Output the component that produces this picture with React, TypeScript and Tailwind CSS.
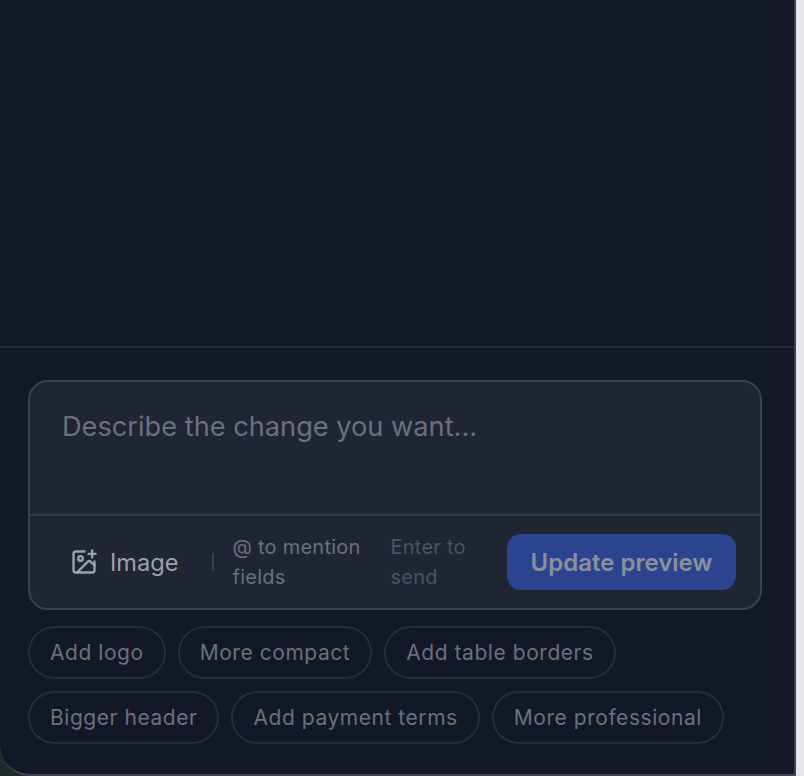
import { ImagePlus } from 'lucide-react';

const row1 = ['Add logo', 'More compact', 'Add table borders'];
const row2 = ['Bigger header', 'Add payment terms', 'More professional'];

function Chip({ label }: { label: string }) {
  return (
    <button className="h-[53px] rounded-full border-2 border-[#262c39] px-[20px] text-[21px] leading-[30px] tracking-[0.55px] text-[#6b707d]">
      {label}
    </button>
  );
}

export default function App() {
  return (
    <div className="h-[776px] w-[804px] overflow-hidden bg-[#e5e7eb] font-['Inter',sans-serif]">
      <div className="h-[776px] w-[796px] bg-[#1e2b28]">
        <div className="flex h-[776px] flex-col rounded-bl-[30px] border-r-2 border-b-2 border-[#3f4450] bg-[#121826]">
          <div className="h-[346px] shrink-0" />
          <div className="flex-1 border-t-2 border-[#252b38] px-[28px] pt-[32px]">
            <div className="w-[734px] rounded-[20px] border-2 border-[#3a404d] bg-[#1f2532]">
              <div className="h-[132px] px-[32px] pt-[26px] text-[27.2px] leading-[38px] text-[#6b707d]">
                Describe the change you want...
              </div>
              <div className="flex h-[94px] items-center border-t-2 border-[#343a47] pl-[40px] pr-[24px]">
                <button className="flex items-center gap-[12px] text-[23.6px] leading-[32px] text-[#9ca1ac]">
                  <ImagePlus className="h-[28px] w-[28px]" strokeWidth={2} />
                  <span className="pt-[2px]">Image</span>
                </button>
                <span className="ml-[34px] h-[18px] w-[2px] bg-[#3a404d]" />
                <span className="ml-[18px] w-[140px] text-[20px] leading-[30px] tracking-[0.25px] text-[#6b707d]">
                  @ to mention fields
                </span>
                <span className="ml-[18px] w-[100px] text-[20px] leading-[30px] tracking-[0.25px] text-[#4d5360]">
                  Enter to send
                </span>
                <button className="ml-auto h-[56px] w-[229px] rounded-[14px] bg-[#2b4490] pt-[2px] text-[24px] font-semibold leading-[32px] text-[#8b8f9e]">
                  Update preview
                </button>
              </div>
            </div>
            <div className="mt-[16px] flex flex-col gap-[12px]">
              <div className="flex gap-[12px]">
                {row1.map((c) => (
                  <Chip key={c} label={c} />
                ))}
              </div>
              <div className="flex gap-[12px]">
                {row2.map((c) => (
                  <Chip key={c} label={c} />
                ))}
              </div>
            </div>
          </div>
        </div>
      </div>
    </div>
  );
}
